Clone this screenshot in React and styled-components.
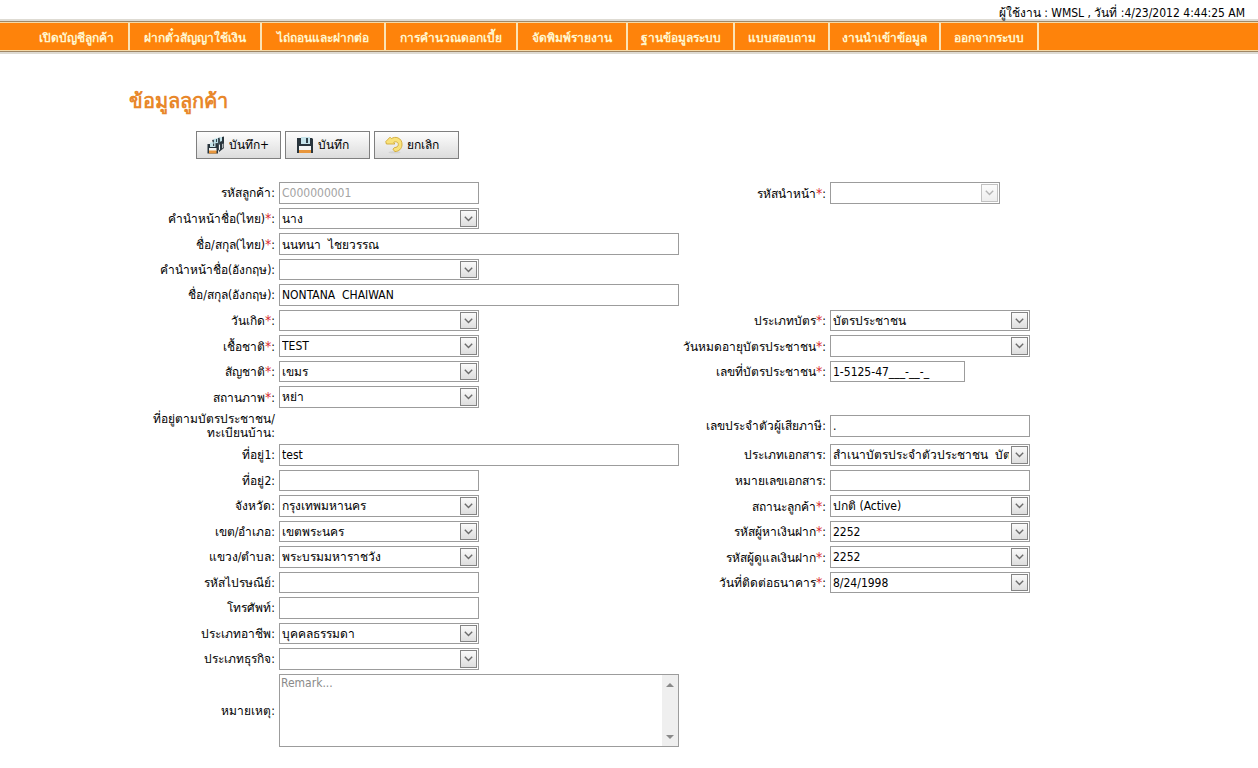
import React, { useState } from "react";
import styled, { createGlobalStyle } from "styled-components";

const GlobalStyle = createGlobalStyle`
  * { box-sizing: border-box; }
  body {
    margin: 0;
    background: #fff;
    color: #000;
    font-family: "DejaVu Sans Condensed", "Noto Sans", sans-serif;
    font-size: 12px;
    line-height: 16px;
  }
`;

const UserBar = styled.header`
  display: flex;
  justify-content: flex-end;
  height: 19px;
  padding: 6px 13px 0 0;
  line-height: 14px;
  white-space: nowrap;
`;

const Menu = styled.nav`
  border-top: 2px solid #dedbd3;
  border-bottom: 2px solid #dedbd3;
`;

const MenuBand = styled.div`
  border-top: 1px solid #a08765;
  border-bottom: 1px solid #a08765;
  background: #fe830b;
`;

const MenuList = styled.ul`
  display: flex;
  margin: 0;
  padding: 0 0 0 24px;
  list-style: none;
  border-top: 1px solid #f5d9a6;
  border-bottom: 1px solid #f5d9a6;
`;

const MenuItem = styled.li`
  flex: 0 1 ${(p) => p.$width}px;
  border-right: 2px solid #fbe3b4;
`;

const MenuLink = styled.a`
  display: block;
  height: 27px;
  line-height: 30px;
  text-align: center;
  text-decoration: none;
  white-space: nowrap;
  font-size: 12px;
  font-weight: bold;
  color: #fff6cf;
`;

const Page = styled.main`
  max-width: 1000px;
  margin: 0 auto;
  padding-bottom: 20px;
`;

const Title = styled.h1`
  margin: 0;
  padding-top: 34px;
  font-size: 20px;
  line-height: 26px;
  color: #e8872a;
`;

const Toolbar = styled.div`
  display: flex;
  gap: 4px;
  padding: 17px 0 23px 67px;
`;

const ToolButton = styled.button`
  display: flex;
  align-items: center;
  gap: 4px;
  width: 85px;
  height: 28px;
  padding: 0 0 0 10px;
  border: 1px solid #7f7f7f;
  background: linear-gradient(#fdfdfd, #dcdcdc);
  font: inherit;
  color: #000;
  white-space: nowrap;

  svg { flex: none; }
`;

const Form = styled.form`
  display: grid;
  grid-template-columns: 146px 400px 143px 200px;
  grid-template-rows: repeat(4, 22px 21px) 22px 28px repeat(4, 22px 21px) 22px 73px;
  gap: 4px;
`;

const Label = styled.label`
  grid-row: ${(p) => p.$row};
  grid-column: ${(p) => (p.$right ? 3 : 1)};
  align-self: center;
  text-align: right;
  line-height: 14px;
  white-space: nowrap;
`;

const Star = styled.span`
  font-size: 14px;
  line-height: 1;
  color: #d8262c;
`;

const Control = styled.div`
  position: relative;
  grid-row: ${(p) => p.$row};
  grid-column: ${(p) => (p.$right ? 4 : 2)};
  align-self: ${(p) => (p.$center ? "center" : "stretch")};
  width: ${(p) => p.$width}px;
  height: ${(p) => (p.$center ? "22px" : "auto")};
`;

const Input = styled.input`
  display: block;
  width: 100%;
  height: 100%;
  margin: 0;
  padding: 0 2px;
  border: 1px solid #9c9c9c;
  border-radius: 0;
  background: #fff;
  font: inherit;
  color: #000;
  white-space: pre;

  &:disabled { color: #a3a3a3; }
`;

const Select = styled.select`
  display: block;
  width: 100%;
  height: 100%;
  margin: 0;
  padding: 0 20px 0 2px;
  border: 1px solid #9c9c9c;
  border-radius: 0;
  background: #fff;
  appearance: none;
  font: inherit;
  color: #000;

  &:disabled { opacity: 1; }
`;

const DropButton = styled.span`
  position: absolute;
  top: 2px;
  right: 2px;
  bottom: 2px;
  display: flex;
  align-items: center;
  justify-content: center;
  width: 17px;
  border: 1px solid #848484;
  background: linear-gradient(#fafafa, #dedede);
  opacity: ${(p) => (p.$disabled ? 0.5 : 1)};
  pointer-events: none;
`;

const Remark = styled.textarea`
  display: block;
  width: 100%;
  height: 100%;
  margin: 0;
  padding: 0 18px 0 1px;
  border: 1px solid #9c9c9c;
  border-radius: 0;
  background: #fff;
  resize: none;
  font: inherit;
  color: #000;

  &::placeholder { color: #8a8a8a; }
`;

const ScrollTrack = styled.span`
  position: absolute;
  top: 1px;
  right: 1px;
  bottom: 1px;
  display: flex;
  flex-direction: column;
  align-items: center;
  justify-content: space-between;
  width: 16px;
  padding: 7px 0 6px;
  background: #efefef;
  pointer-events: none;
`;

const Chevron = () => (
  <svg width="9" height="6" viewBox="0 0 9 6" fill="none" stroke="#6c6c6c" strokeWidth="1.4">
    <path d="M0.8 0.8L4.5 4.5L8.2 0.8" />
  </svg>
);

const SaveIcon = () => (
  <svg width="18" height="16" viewBox="0 0 18 16">
    <path d="M1 1H16L17 2V16H1Z" fill="#29353d" />
    <path d="M5 0H14V7H5Z" fill="#c5e3ea" />
    <path d="M10 1H12V6H10Z" fill="#33434b" />
    <path d="M3 9H15V13H3Z" fill="#f3f5f5" />
    <path d="M3 13H15V16H3Z" fill="#e8963c" />
  </svg>
);

const SaveAllIcon = () => (
  <svg width="18" height="18" viewBox="0 0 18 18">
    <path d="M11 2L17 0.5V12L12 16Z" fill="#29353d" />
    <path d="M12.5 1H15V5L12.5 6Z" fill="#c5e3ea" />
    <path d="M15.3 8L16.3 7.4V11.5L15.3 12.4Z" fill="#f3f5f5" />
    <path d="M5 4L13 2.5V13L9 16.5Z" fill="#3c4c55" />
    <path d="M7 3L11 2V7H7Z" fill="#b5dbe4" />
    <path d="M9 3H10V6H9Z" fill="#33434b" />
    <path d="M12 9L13 8.2V13.5L12 14.5Z" fill="#f3f5f5" />
    <path d="M0.5 8H10L11 9V17.5H0.5Z" fill="#29353d" />
    <path d="M3 6.5H8.5V11H3Z" fill="#c5e3ea" />
    <path d="M6 7.5H7.2V10H6Z" fill="#33434b" />
    <path d="M2 12H9.5V15H2Z" fill="#f3f5f5" />
    <path d="M2 14.5H9.5V17.5H2Z" fill="#e8963c" />
  </svg>
);

const UndoIcon = () => (
  <svg width="18" height="18" viewBox="0 0 18 18">
    <ellipse cx="9.5" cy="16.4" rx="6" ry="1.2" fill="#d2d2d2" />
    <path
      d="M0.8 5.6L5 1.2L6.4 2.6C8.2 1.4 10.6 1 12.8 1.8C15.8 2.9 17.3 5.8 17 9C16.7 12.8 14 15.4 9.8 15.6L8 13.2L9.4 11.6C11.8 11.6 13.2 10.4 13.3 8.6C13.4 6.8 12.2 5.8 10.6 5.8C9.8 5.8 9.2 6 8.8 6.3L9.8 8H1.4Z"
      fill="#f9e27a"
      stroke="#d0a834"
      strokeWidth="0.9"
      strokeLinejoin="round"
    />
  </svg>
);

const MENU = [
  ["เปิดบัญชีลูกค้า", 106],
  ["ฝากตั๋วสัญญาใช้เงิน", 132],
  ["ไถ่ถอนและฝากต่อ", 124],
  ["การคำนวณดอกเบี้ย", 132],
  ["จัดพิมพ์รายงาน", 110],
  ["ฐานข้อมูลระบบ", 107],
  ["แบบสอบถาม", 95],
  ["งานนำเข้าข้อมูล", 111],
  ["ออกจากระบบ", 98],
];

const FIELDS = [
  { id: "code", row: 1, label: "รหัสลูกค้า", value: "C000000001", disabled: true },
  { id: "prefixCode", row: 1, right: true, label: "รหัสนำหน้า", star: true, select: true, value: "", disabled: true, width: 170 },
  { id: "titleTh", row: 2, label: "คำนำหน้าชื่อ(ไทย)", star: true, select: true, value: "นาง" },
  { id: "nameTh", row: 3, label: "ชื่อ/สกุล(ไทย)", star: true, value: "นนทนา  ไชยวรรณ", width: 400 },
  { id: "titleEn", row: 4, label: "คำนำหน้าชื่อ(อังกฤษ)", select: true, value: "" },
  { id: "nameEn", row: 5, label: "ชื่อ/สกุล(อังกฤษ)", value: "NONTANA  CHAIWAN", width: 400 },
  { id: "birth", row: 6, label: "วันเกิด", star: true, select: true, value: "" },
  { id: "cardType", row: 6, right: true, label: "ประเภทบัตร", star: true, select: true, value: "บัตรประชาชน" },
  { id: "race", row: 7, label: "เชื้อชาติ", star: true, select: true, value: "TEST" },
  { id: "cardExpiry", row: 7, right: true, label: "วันหมดอายุบัตรประชาชน", star: true, select: true, value: "" },
  { id: "nation", row: 8, label: "สัญชาติ", star: true, select: true, value: "เขมร" },
  { id: "cardNo", row: 8, right: true, label: "เลขที่บัตรประชาชน", star: true, value: "1-5125-47___-__-_", width: 135 },
  { id: "marital", row: 9, label: "สถานภาพ", star: true, select: true, value: "หย่า" },
  { id: "taxNo", row: 10, right: true, label: "เลขประจำตัวผู้เสียภาษี", value: ".", center: true },
  { id: "addr1", row: 11, label: "ที่อยู่1", value: "test", width: 400 },
  { id: "docType", row: 11, right: true, label: "ประเภทเอกสาร", select: true, value: "สำเนาบัตรประจำตัวประชาชน\u00a0 บัตรข้าราชการ" },
  { id: "addr2", row: 12, label: "ที่อยู่2", value: "" },
  { id: "docNo", row: 12, right: true, label: "หมายเลขเอกสาร", value: "" },
  { id: "province", row: 13, label: "จังหวัด", select: true, value: "กรุงเทพมหานคร" },
  { id: "status", row: 13, right: true, label: "สถานะลูกค้า", star: true, select: true, value: "ปกติ (Active)" },
  { id: "district", row: 14, label: "เขต/อำเภอ", select: true, value: "เขตพระนคร" },
  { id: "finder", row: 14, right: true, label: "รหัสผู้หาเงินฝาก", star: true, select: true, value: "2252" },
  { id: "subdistrict", row: 15, label: "แขวง/ตำบล", select: true, value: "พระบรมมหาราชวัง" },
  { id: "keeper", row: 15, right: true, label: "รหัสผู้ดูแลเงินฝาก", star: true, select: true, value: "2252" },
  { id: "zip", row: 16, label: "รหัสไปรษณีย์", value: "" },
  { id: "contactDate", row: 16, right: true, label: "วันที่ติดต่อธนาคาร", star: true, select: true, value: "8/24/1998" },
  { id: "phone", row: 17, label: "โทรศัพท์", value: "" },
  { id: "occupation", row: 18, label: "ประเภทอาชีพ", select: true, value: "บุคคลธรรมดา" },
  { id: "business", row: 19, label: "ประเภทธุรกิจ", select: true, value: "" },
];

function Field({ id, row, right, label, star, select, value, disabled, width = 200, center }) {
  const [text, setText] = useState(value);
  return (
    <>
      <Label htmlFor={id} $row={row} $right={right}>
        {label}{star && <Star>*</Star>}:
      </Label>
      <Control $row={row} $right={right} $width={width} $center={center}>
        {select ? (
          <>
            <Select id={id} defaultValue={value} disabled={disabled}>
              <option value={value}>{value}</option>
            </Select>
            <DropButton $disabled={disabled}><Chevron /></DropButton>
          </>
        ) : (
          <Input id={id} type="text" value={text} disabled={disabled} onChange={(e) => setText(e.target.value)} />
        )}
      </Control>
    </>
  );
}

export default function App() {
  return (
    <>
      <GlobalStyle />
      <UserBar>ผู้ใช้งาน : WMSL , วันที่ :4/23/2012 4:44:25 AM</UserBar>
      <Menu>
        <MenuBand>
          <MenuList>
            {MENU.map(([name, width]) => (
              <MenuItem key={name} $width={width}><MenuLink href="#">{name}</MenuLink></MenuItem>
            ))}
          </MenuList>
        </MenuBand>
      </Menu>
      <Page>
        <Title>ข้อมูลลูกค้า</Title>
        <Toolbar>
          <ToolButton type="button"><SaveAllIcon />บันทึก+</ToolButton>
          <ToolButton type="button"><SaveIcon />บันทึก</ToolButton>
          <ToolButton type="button"><UndoIcon />ยกเลิก</ToolButton>
        </Toolbar>
        <Form>
          {FIELDS.map((f) => <Field key={f.id} {...f} />)}
          <Label as="span" $row={10}>ที่อยู่ตามบัตรประชาชน/<br />ทะเบียนบ้าน:</Label>
          <Label htmlFor="remark" $row={20}>หมายเหตุ:</Label>
          <Control $row={20} $width={400}>
            <Remark id="remark" placeholder="Remark..." />
            <ScrollTrack>
              <svg width="8" height="5" viewBox="0 0 8 5"><path d="M0 5L4 1L8 5Z" fill="#8a8a8a" /></svg>
              <svg width="8" height="5" viewBox="0 0 8 5"><path d="M0 0L4 4L8 0Z" fill="#8a8a8a" /></svg>
            </ScrollTrack>
          </Control>
        </Form>
      </Page>
    </>
  );
}
